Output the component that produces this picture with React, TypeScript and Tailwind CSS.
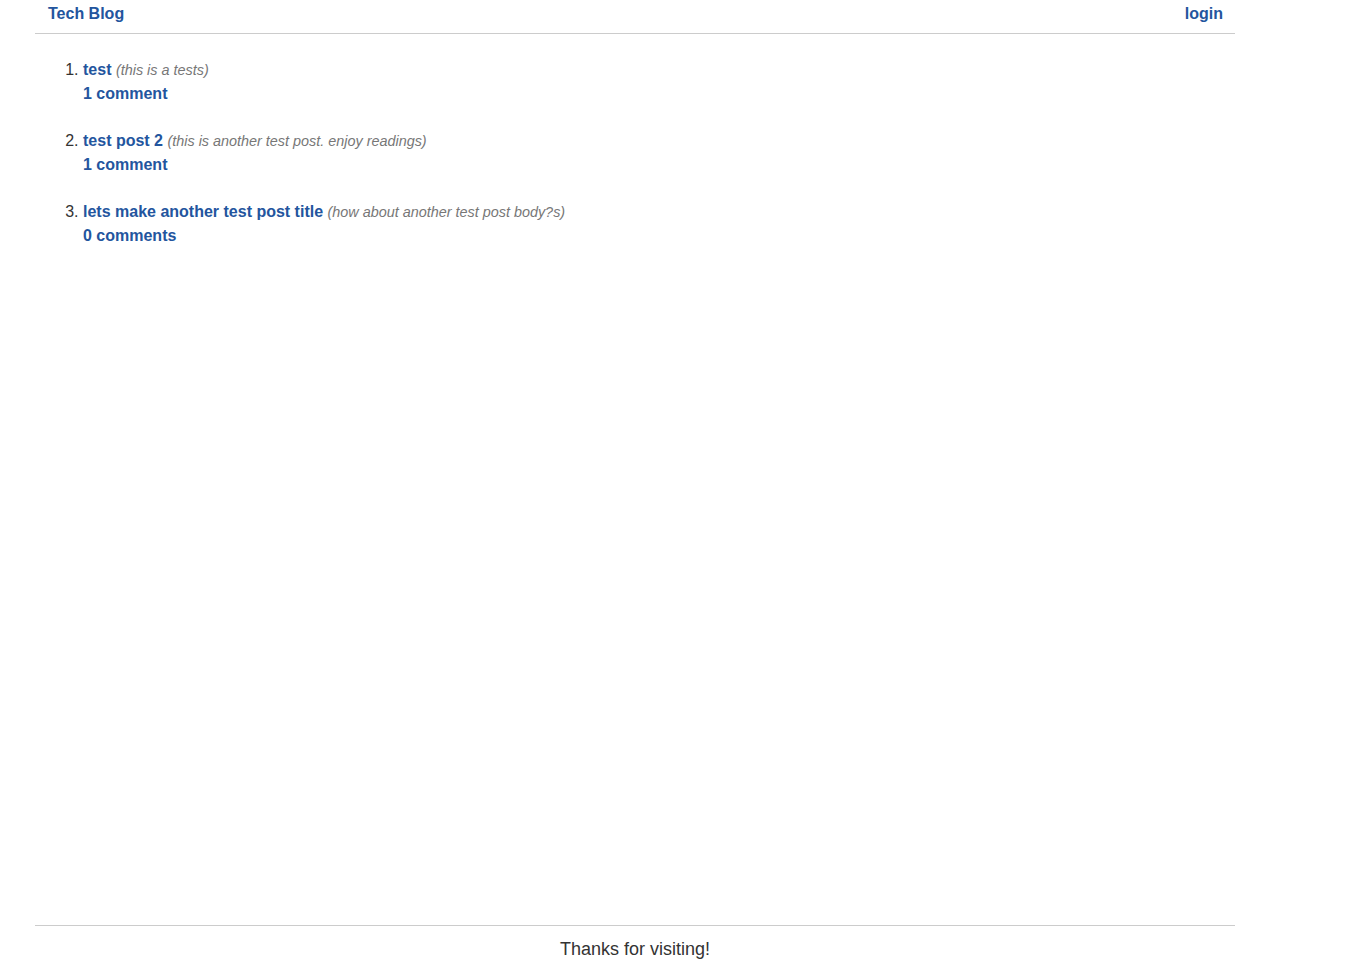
const posts = [
  { title: "test", body: "this is a tests", comments: "1 comment" },
  { title: "test post 2", body: "this is another test post. enjoy readings", comments: "1 comment" },
  { title: "lets make another test post title", body: "how about another test post body?s", comments: "0 comments" },
]

export default function App() {
  return (
    <div className="flex min-h-screen w-[1200px] ml-[35px] flex-col font-['Liberation_Sans',Arial,sans-serif] text-[#333]">
      <header className="flex h-[34px] items-start justify-between border-b border-[#cccccc] pl-[13px] pr-[12px] pt-[4px]">
        <a href="#" className="text-[16px] font-bold leading-[20px] text-[#23559e]">Tech Blog</a>
        <a href="#" className="text-[16px] font-bold leading-[20px] text-[#23559e]">login</a>
      </header>

      <main className="flex-1">
        <ol className="mt-[24px] list-decimal pl-[48px] text-[16px]">
          {posts.map((p) => (
            <li key={p.title} className="mb-[23px] leading-[24px] marker:text-[#333]">
              <a href="#" className="font-bold text-[#23559e]">{p.title}</a>{" "}
              <span className="text-[14.4px] italic text-[#777]">({p.body})</span>
              <div>
                <a href="#" className="font-bold text-[#23559e]">{p.comments}</a>
              </div>
            </li>
          ))}
        </ol>
      </main>

      <footer className="border-t border-[#cccccc] pt-[11px] pb-[8px] text-center text-[18px] leading-[24px] text-[#333]">
        Thanks for visiting!
      </footer>
    </div>
  )
}
